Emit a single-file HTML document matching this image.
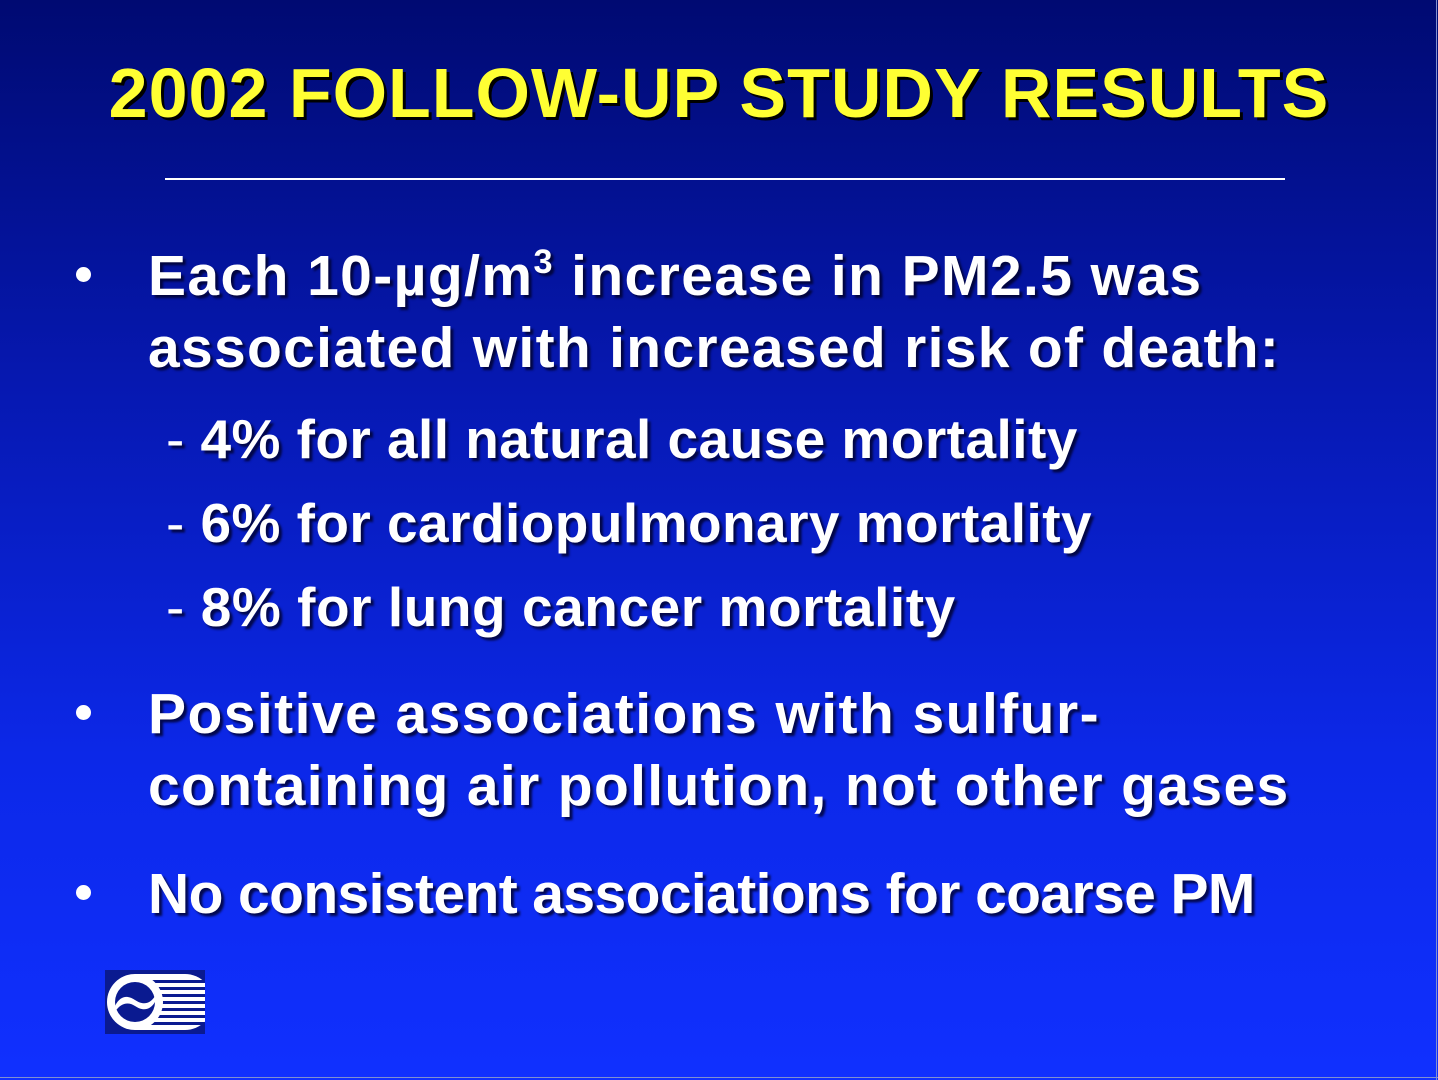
<!DOCTYPE html>
<html><head><meta charset="utf-8"><style>
html,body{margin:0;padding:0}
body{width:1438px;height:1080px;position:relative;overflow:hidden;background:linear-gradient(to bottom,#000a72 0%,#0618b0 35%,#0c28e8 70%,#1030ff 100%);font-family:"Liberation Sans",Arial,sans-serif;font-weight:bold;color:#fff}
.t{position:absolute;white-space:nowrap;line-height:1;text-shadow:3px 3px 2px rgba(0,0,40,.8)}
.title{font-size:70px;color:#ffff33;left:0;width:1438px;text-align:center;top:58px;letter-spacing:1px;text-shadow:3px 3px 0 #000}
.b{font-size:57px;left:148px}
.s{font-size:55px;left:166px}
.s span{font-weight:normal}
.dot{position:absolute;left:76px;width:15px;height:15px;border-radius:50%;background:#fff}
sup{font-size:0.6em;vertical-align:0;position:relative;top:-0.65em}
</style></head><body>
<div class="t title">2002 FOLLOW-UP STUDY RESULTS</div>
<div style="position:absolute;left:165px;top:178px;width:1120px;height:2px;background:#fff"></div>
<div style="position:absolute;right:1px;top:0;width:1px;height:1080px;background:#8090d0"></div>
<div style="position:absolute;left:0;bottom:2px;width:1438px;height:1px;background:#8090d0"></div>

<div class="dot" style="top:267px"></div>
<div class="t b" style="top:248px;letter-spacing:1.4px">Each 10-µg/m<sup>3</sup> increase in PM2.5 was</div>
<div class="t b" style="top:320px;letter-spacing:1.3px">associated with increased risk of death:</div>
<div class="t s" style="top:412px;letter-spacing:0.45px"><span>-</span> 4% for all natural cause mortality</div>
<div class="t s" style="top:496px;letter-spacing:0.45px"><span>-</span> 6% for cardiopulmonary mortality</div>
<div class="t s" style="top:580px;letter-spacing:0.55px"><span>-</span> 8% for lung cancer mortality</div>
<div class="dot" style="top:705px"></div>
<div class="t b" style="top:686px;letter-spacing:1.45px">Positive associations with sulfur-</div>
<div class="t b" style="top:758px;letter-spacing:1.35px">containing air pollution, not other gases</div>
<div class="dot" style="top:885px"></div>
<div class="t b" style="top:866px;letter-spacing:-0.6px">No consistent associations for coarse PM</div>

<svg style="position:absolute;left:105px;top:970px" width="100" height="64" viewBox="0 0 100 64">
<rect x="0" y="0" width="100" height="64" fill="#0a1a90"/>
<path d="M30 4 H80 A28 28 0 0 1 80 60 H30 Z" fill="#fff"/>
<g fill="#0a1a90"><rect x="40" y="10" width="60" height="3"/><rect x="40" y="17" width="60" height="3"/><rect x="40" y="24" width="60" height="3"/><rect x="40" y="31" width="60" height="3"/><rect x="40" y="38" width="60" height="3"/><rect x="40" y="45" width="60" height="3"/><rect x="40" y="52" width="60" height="3"/></g>
<circle cx="30" cy="32" r="28" fill="#fff"/>
<circle cx="30" cy="32" r="20" fill="#0a1a90"/>
<path d="M10 36 C16 24 24 26 30 30 C36 34 44 36 50 26 L50 32 C44 42 36 40 30 36 C24 32 16 32 10 42 Z" fill="#fff"/>
</svg>
</body></html>
